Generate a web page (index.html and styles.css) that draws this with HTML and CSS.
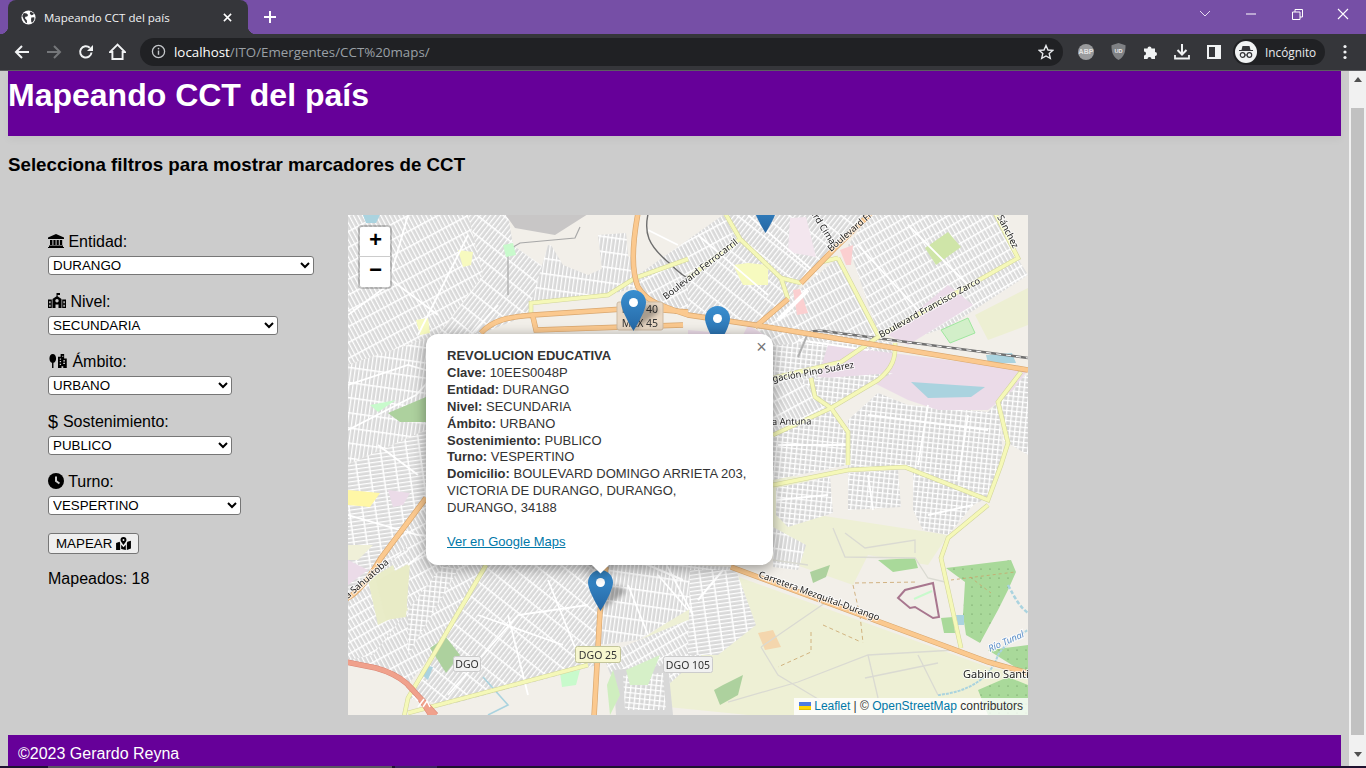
FILE: index.html
```html
<!DOCTYPE html>
<html lang="es">
<head>
<meta charset="utf-8">
<title>Mapeando CCT del país</title>
<link rel="stylesheet" href="styles.css">
</head>
<body>
<div class="chrome">
  <div class="tabstrip">
    <div class="tab">
      <svg class="favicon" viewBox="0 0 16 16"><circle cx="8" cy="8" r="7.500" fill="#fff"/><path d="M3 3.200l3 .6 1.600 1.600-1 1.600-2 .2-.4 1.600 2 2 .2 3-1.200-.1L2.600 9.500 1.300 6.500zM10 1.500l3.600 2-.6 1.500-2 .5-1.600-1.500zM11 8l3.200-.4.100 2.400-2 3.300-1.300-.3-.3-3z" fill="#35363a"/></svg>
      <span class="tab-title">Mapeando CCT del país</span>
      <svg class="tab-close" viewBox="0 0 10 10"><path d="M1 1l8 8M9 1l-8 8" stroke="#fff" stroke-width="1.700"/></svg>
    </div>
    <svg class="newtab" viewBox="0 0 12 12"><path d="M6 0v12M0 6h12" stroke="#fff" stroke-width="2"/></svg>
    <div class="winctl">
      <svg class="wc wc-chev" viewBox="0 0 12 8"><path d="M1 1l5 5 5-5" fill="none" stroke="#e6dcf0" stroke-width="1"/></svg>
      <svg class="wc wc-min" viewBox="0 0 12 2"><path d="M1 1h10" stroke="#fff" stroke-width="1"/></svg>
      <svg class="wc wc-max" viewBox="0 0 11 11"><path d="M.5 3h7.500v7.500H.5zM3 3V.5h7.500V8H8" fill="none" stroke="#fff" stroke-width="1"/></svg>
      <svg class="wc wc-close" viewBox="0 0 12 12"><path d="M1 1l10 10M11 1L1 11" stroke="#fff" stroke-width="1.100"/></svg>
    </div>
  </div>
  <div class="toolbar">
    <svg class="tb tb-back" viewBox="0 0 16 16"><path d="M15 8H2M8 2L2 8l6 6" fill="none" stroke="#f1f3f4" stroke-width="2"/></svg>
    <svg class="tb tb-fwd" viewBox="0 0 16 16"><path d="M1 8h13M8 2l6 6-6 6" fill="none" stroke="#75777a" stroke-width="2"/></svg>
    <svg class="tb tb-reload" viewBox="0 0 16 16"><path d="M13.500 8.500A5.700 5.700 0 1 1 11.800 3.800" fill="none" stroke="#f1f3f4" stroke-width="2"/><path d="M15 1v6H9z" fill="#f1f3f4"/></svg>
    <svg class="tb tb-home" viewBox="0 0 16 16"><path d="M8 1.500L1 8.500h2.200V15h9.600V8.500H15z" fill="none" stroke="#f1f3f4" stroke-width="1.800" stroke-linejoin="miter"/></svg>
    <div class="omnibox">
      <svg class="info" viewBox="0 0 16 16"><circle cx="8" cy="8" r="6.500" fill="none" stroke="#c4c7ca" stroke-width="1.400"/><path d="M8 7v4.500" stroke="#c4c7ca" stroke-width="1.500"/><circle cx="8" cy="4.900" r=".9" fill="#c4c7ca"/></svg>
      <span class="url"><b class="host">localhost</b>/ITO/Emergentes/CCT%20maps/</span>
      <svg class="star" viewBox="0 0 16 16"><path d="M8 1.500l2 4.500 4.800.4-3.600 3.200 1.100 4.800L8 12l-4.300 2.400 1.100-4.800L1.200 6.400 6 6z" fill="none" stroke="#e8eaed" stroke-width="1.400"/></svg>
    </div>
    <div class="ext-abp"><span>ABP</span></div>
    <svg class="ext-ub" viewBox="0 0 16 18"><path d="M8 0l7.500 2.200c0 7-1.200 12-7.500 15.800C1.700 14.200.5 9.200.5 2.200z" fill="#7f8184"/><text x="8" y="10.500" class="ub-text">UD</text></svg>
    <svg class="ext-puzzle" viewBox="0 0 16 16"><path d="M1 4.500h3.500a2 2 0 1 1 4 0H12V8a2 2 0 1 1 0 4v3H8.500a2 2 0 1 0-4 0H1v-3.500a2 2 0 1 0 0-4z" fill="#f1f3f4"/></svg>
    <svg class="ext-dl" viewBox="0 0 16 16"><path d="M8 0v10M3.500 6L8 10.500 12.500 6" fill="none" stroke="#f1f3f4" stroke-width="2"/><path d="M1 11v3.500h14V11" fill="none" stroke="#f1f3f4" stroke-width="1.800"/></svg>
    <svg class="ext-side" viewBox="0 0 14 14"><path d="M0 0h14v14H0z" fill="#f1f3f4"/><path d="M2 2h6v10H2z" fill="#35363a"/></svg>
    <div class="profile">
      <svg class="avatar" viewBox="0 0 22 22"><circle cx="11" cy="11" r="11" fill="#f1f3f4"/><path d="M7.500 5h7l1 4h2.500v1H4v-1h2.500z" fill="#35363a"/><circle cx="7.600" cy="14" r="2.300" fill="none" stroke="#35363a" stroke-width="1.200"/><circle cx="14.400" cy="14" r="2.300" fill="none" stroke="#35363a" stroke-width="1.200"/><path d="M9.900 14h2.200" stroke="#35363a" stroke-width="1"/></svg>
      <span>Incógnito</span>
    </div>
    <svg class="kebab" viewBox="0 0 4 16"><circle cx="2" cy="2.500" r="1.600" fill="#f1f3f4"/><circle cx="2" cy="8" r="1.600" fill="#f1f3f4"/><circle cx="2" cy="13.500" r="1.600" fill="#f1f3f4"/></svg>
  </div>
</div>

<div class="viewport">
  <div class="page">
    <header class="site-header"><h1>Mapeando CCT del país</h1></header>
    <h3 class="subtitle">Selecciona filtros para mostrar marcadores de CCT</h3>
    <main class="content">
      <form class="filters">
        <div class="field">
          <label><svg class="ico ico-w16" viewBox="0 0 16 14"><path d="M8 0L0 3.400V5h16V3.400zM2 6h2.400v5H2zM5.400 6h2.200v5H5.400zM8.600 6h2.200v5H8.600zM11.800 6h2.400v5h-2.400zM1 11.400h14V13H1zM0 13h16v1H0z"/></svg> Entidad:</label>
          <select class="sel-entidad"><option>DURANGO</option></select>
        </div>
        <div class="field">
          <label><svg class="ico ico-w18" viewBox="0 0 18 15"><path d="M8.500 0h3.500v2H9.600v1.300L13.500 6v9h-3v-3.500h-3V15h-3V6l4-2.700zM0 6.500h3.800V15H0zM14.200 6.500H18V15h-3.800zM1.200 8.300v2h1.400v-2zM1.200 11.800v2h1.400v-2zM15.400 8.300v2h1.400v-2zM15.400 11.800v2h1.400v-2z" fill-rule="evenodd"/><circle cx="9" cy="7.700" r="1.700" fill="#ccc"/></svg> Nivel:</label>
          <select class="sel-nivel"><option>SECUNDARIA</option></select>
        </div>
        <div class="field">
          <label><svg class="ico ico-w20" viewBox="0 0 20 16"><path d="M4 0c2.300 0 3.800 2.400 3.800 5S6.300 10 4.800 10v6H3.200v-6C1.700 10 .2 7.600.2 5S1.700 0 4 0z"/><path d="M10 3h3V0h4v5h3v11h-4v-2h-2v2h-4zM12 5v1.500h1.500V5zM12 8v1.500h1.500V8zM15 2v1.500h1V2zM16 7v1.500h2V7zM16 10v1.500h2V10zM12 11v1.500h1.500V11z" fill-rule="evenodd"/></svg> Ámbito:</label>
          <select class="sel-ambito"><option>URBANO</option></select>
        </div>
        <div class="field">
          <label><span class="dollar">$</span> Sostenimiento:</label>
          <select class="sel-sost"><option>PUBLICO</option></select>
        </div>
        <div class="field">
          <label><svg class="ico ico-w16 ico-tall" viewBox="0 0 16 16"><circle cx="8" cy="8" r="8"/><path d="M7 3.500h2v4l3 2.200-1.100 1.500L7 8.500z" fill="#ccc"/></svg> Turno:</label>
          <select class="sel-turno"><option>VESPERTINO</option></select>
        </div>
        <button type="button" class="btn-map">MAPEAR <svg class="ico-map" viewBox="0 0 16 14"><path d="M8 0a3.200 3.200 0 0 1 3.200 3.200C11.200 5 8 8.500 8 8.500S4.800 5 4.800 3.200A3.200 3.200 0 0 1 8 0zM8 2.200a1 1 0 1 0 0 2 1 1 0 0 0 0-2z" fill-rule="evenodd"/><path d="M0 6.500l3.800-1.300.6 1.500V14L0 14zM5.500 8.300L8 11l2.500-2.700V14l-5-1zM11.600 6.700l.6-1.500L16 4v8.500L11.600 14z"/></svg></button>
        <p class="count">Mapeados: 18</p>
      </form>

      <section class="map">
        <svg class="tiles" viewBox="0 0 680 500" aria-hidden="true">
          <defs>
            <pattern id="p1" width="4" height="15" patternUnits="userSpaceOnUse" patternTransform="rotate(8)"><rect width="4" height="15" fill="#d9d9d9"/><path d="M.5 0v15M0 .75h4" stroke="#fff" stroke-width="1.500"/></pattern>
            <pattern id="p2" width="4" height="14" patternUnits="userSpaceOnUse" patternTransform="rotate(-28)"><rect width="4" height="14" fill="#d9d9d9"/><path d="M.5 0v14M0 .75h4" stroke="#fff" stroke-width="1.500"/></pattern>
            <pattern id="p3" width="4" height="16" patternUnits="userSpaceOnUse" patternTransform="rotate(38)"><rect width="4" height="16" fill="#d9d9d9"/><path d="M.5 0v16M0 .75h4" stroke="#fff" stroke-width="1.500"/></pattern>
            <pattern id="p4" width="4" height="13" patternUnits="userSpaceOnUse" patternTransform="rotate(82)"><rect width="4" height="13" fill="#d9d9d9"/><path d="M.5 0v13M0 .75h4" stroke="#fff" stroke-width="1.500"/></pattern>
            <pattern id="p5" width="5" height="5" patternUnits="userSpaceOnUse" patternTransform="rotate(6)"><rect width="5" height="5" fill="#d6d6d6"/><path d="M.5 0v5M0 .5h5" stroke="#fff" stroke-width="1.700"/></pattern>
            <pattern id="p6" width="4" height="10" patternUnits="userSpaceOnUse" patternTransform="rotate(-30)"><rect width="4" height="10" fill="#dadada"/><path d="M.5 0v10M0 .75h4" stroke="#fff" stroke-width="1.500"/></pattern>
            <pattern id="dots" width="9" height="9" patternUnits="userSpaceOnUse"><rect width="9" height="9" fill="#a9d99a"/><circle cx="3" cy="3" r=".6" fill="#5f8c53"/></pattern>
            <linearGradient id="mk" x1="0" y1="0" x2="0" y2="1"><stop offset="0" stop-color="#3a8fd0"/><stop offset="1" stop-color="#2567a4"/></linearGradient>
            <path id="pri1" d="M290-2C285 25 283 55 290 72C298 85 305 88 340 100L407 110L680 155"/>
            <path id="pri1b" d="M133 118C145 105 160 102 185 100L290 93L340 97M185 102L188 115L335 110"/>
            <path id="pri2" d="M407 112L440 84M453 68L486 34L523-2"/>
            <path id="pri3" d="M383 352L640 447L680 458"/>
            <path id="pri4" d="M78 283L33 343C20 365 10 378-2 384"/>
            <path id="pri5" d="M258 352L252 397L249 450L246 502"/>
            <path id="sec1" d="M377-2L392 24L433 63L440 84M392 24L340 63M340 44L287 63L260 80L183 88L183 100"/>
            <path id="sec2" d="M490 43L530 120M433 63L453 68M490 43L473 47"/>
            <path id="sec3" d="M425 163L493 147L530 122L670 43L647-2"/>
            <path id="sec4" d="M547 128C548 142 545 153 530 165L483 193L440 213L425 220"/>
            <path id="sec5" d="M463 163L467 182L483 193L500 217V250M425 270L500 255L557 252L640 285L653 250L660 228L650 187L673 157"/>
            <path id="sec6" d="M640 290L600 323L593 343L613 433"/>
            <path id="sec7" d="M138 350L93 427L60 483L56 502M60 498L240 450"/>
            <path id="mw" d="M-2 447L28 453C53 460 65 470 84 502M60 470L88 500"/>
          </defs>
          <rect width="680" height="500" fill="#f2efe9"/>

          <!-- farmland -->
          <path d="M400 260L460 262L470 300L600 320L580 350L520 340L505 370L420 340L383 350L360 320L380 290zM385 360L640 452L680 460V500H400L300 490L270 440L330 400z" fill="#eef0d5"/>
          <path d="M627 100L680 73V110L640 125z" fill="#edefd3"/>

          <!-- urban west -->
          <path d="M-1-1H120L135 60L90 120L-1 150z" fill="url(#p2)"/>
          <path d="M120-1H160L165 30L200 55L180 100L135 118L90 120L135 60z" fill="url(#p3)"/>
          <path d="M-1 150L90 120L135 118L125 200L78 215L-1 250z" fill="url(#p1)"/>
          <path d="M-1 250L78 215L78 283L33 343L-1 384z" fill="url(#p4)"/>
          <path d="M78 283L120 240L180 350L138 350L93 427L60 470L28 453L-1 447V384L33 343z" fill="url(#p2)"/>
          <path d="M138 350H258L249 450L100 490L60 483L93 427z" fill="url(#p3)"/>
          <path d="M258 350L340 350L383 352L340 395L290 425L252 430z" fill="url(#p1)"/>
          <path d="M200 30L285 40L290 72L260 80L183 88z" fill="url(#p1)"/>
          <path d="M290 60L375 0L392 24L340 63L340 97L295 92z" fill="url(#p2)"/>
          <path d="M0 380C20 375 45 345 60 330L60 395L25 440L0 445z" fill="url(#p6)"/>
          <path d="M60 395L95 350L110 355L60 440z" fill="url(#p5)"/>
          <path d="M255 440L340 405L365 430L320 470L270 480z" fill="url(#p6)"/>
          <path d="M265 455L320 450L325 500H268z" fill="#d8d8d8"/>
          <path d="M275 460L315 458L318 495H277z" fill="url(#p5)"/>

          <!-- urban east -->
          <path d="M392 24L377-1H523L486 34L440 84L407 110L340 100V63z" fill="url(#p3)"/>
          <path d="M440 84L490 43L530 120L493 147L425 130L407 112z" fill="url(#p2)"/>
          <path d="M500 30L523-1H647L670 43L580 95L530 118z" fill="url(#p6)"/>
          <path d="M540 95L660 28L680 60L600 112L560 125z" fill="url(#p6)"/>
          <path d="M425 130L530 125L500 150L425 165z" fill="url(#p5)"/>
          <path d="M425 165L493 150L530 125L547 128L545 155L483 193L425 220z" fill="url(#p2)"/>
          <path d="M425 220L483 193L500 217V250L425 265z" fill="url(#p5)"/>
          <path d="M500 205L530 178L560 190L640 197L650 187L655 240L640 285L557 252L500 255z" fill="url(#p5)"/>
          <path d="M650 170L680 160V240L655 225z" fill="url(#p5)"/>
          <path d="M428 273L482 262L485 298L440 312L428 300z" fill="url(#p5)"/>
          <path d="M500 258L550 255L553 292L500 295z" fill="url(#p5)"/>
          <path d="M565 256L635 285L625 290L600 320L575 315L565 295z" fill="url(#p5)"/>
          <path d="M342 355L388 355L408 410L370 440L340 440z" fill="url(#p4)"/>
          <path d="M425 312L458 330L450 355L425 352z" fill="url(#p1)"/>

          <!-- land use -->
          <path d="M540 120L600 70L625 90L560 130zM480 130L680 155L665 175L640 195L590 195L560 185L520 165L470 162z" fill="#ebdbe8"/>
          <path d="M450 165L545 158L530 165L483 190z" fill="url(#p5)"/>
          <path d="M563 167L637 172L623 182L580 183z" fill="#aad3df"/>
          <path d="M638 140L664 138L668 148L640 148z" fill="#aad3df"/>
          <path d="M577 33L600 17L613 32L588 50z" fill="#cfe5a8"/>
          <path d="M593 115L620 103L627 118L602 128z" fill="#d2efc9" stroke="#9ee79e"/>
          <path d="M442 3L458 2L468 42L440 37z" fill="#f3e6ee"/>
          <path d="M385 50L400 48L420 50L420 70L395 70z" fill="#f7fabf"/>
          <path d="M445 75L452 74L460 98L449 100z" fill="#fbcfd0"/>
          <path d="M492 35L505 30L503 50L498 50z" fill="#fbcfd0"/>
          <path d="M340 115L395 120L400 110L420 122L340 120z" fill="#ebdbe8"/>
          <path d="M0 345L20 355L0 370z" fill="#ebdbe8"/>
          <path d="M40 275L62 278L55 290L45 292z" fill="#ebdbe8"/>
          <path d="M0 275L32 278L22 292L0 290z" fill="#fff7a6"/>

          <!-- quarry and gray lots -->
          <path d="M157-1H240L207 20L167 13z" fill="#c8c6c6"/>
          <path d="M200 25L240 3L280 10L285 40L240 60L215 50z" fill="#f2efe9"/>
          <path d="M250 20L278 18L282 60L255 65z" fill="url(#p1)"/>
          <path d="M160 80V35L172 28L227 23L232 12" fill="none" stroke="#a8a8a8" stroke-width="1.200"/>
          <path d="M20 365L45 350L60 395L30 410z" fill="#e9ecc8"/>
          <path d="M0 330H25L10 345H0z" fill="#f0f0d8"/>
          <path d="M28 366L62 348L58 402L38 405z" fill="#e8ebc6"/>

          <!-- parks -->
          <path d="M40 198L78 182L78 207L52 207z" fill="#add19e"/>
          <path d="M22 190L48 185L30 197z" fill="#c8facc"/>
          <path d="M110 35L125 37L123 50L115 52z" fill="#f7fabf"/>
          <path d="M68 105L80 103L82 118L72 120z" fill="#f7fabf"/>
          <path d="M155 30L165 28L168 40L158 42z" fill="#c8facc"/>
          <path d="M82 433L98 422L112 440L98 458z" fill="#add19e"/>
          <path d="M212 458L232 455L228 470L214 472z" fill="#c8facc"/>
          <path d="M462 357L482 350L478 362L465 368z" fill="#add19e"/>
          <path d="M530 345L567 343L570 353L545 357z" fill="#a9d99a"/>
          <path d="M598 353L663 345L668 357L660 375L650 395L632 428L618 420L615 400L617 367z" fill="url(#dots)"/>
          <path d="M593 403L605 402L607 418L596 418z" fill="#a9d99a"/>
          <path d="M366 475L375 470L395 460L390 480L372 490z" fill="#add19e"/>
          <path d="M640 435L680 430V460zM630 475L660 462L680 470V500H640z" fill="url(#dots)"/>
          <path d="M278 455L312 440L300 470L282 470z" fill="#d6f0c8"/>
          <path d="M259 470L265 455L272 480L262 500z" fill="#cfeebf"/>
          <path d="M608 400L616 400V410L610 410z" fill="#aad3df"/>
          <path d="M410 418L425 415L433 432L417 435z" fill="#f4d6ad"/>

          <!-- water -->
          <path d="M590 480C610 478 640 470 650 440C660 425 672 420 680 415" fill="none" stroke="#aad3df" stroke-width="2" stroke-dasharray="3 1"/>
          <path d="M660 370C668 385 672 392 680 398" fill="none" stroke="#aad3df" stroke-width="2.500" stroke-dasharray="4 2"/>
          <path d="M135 462L160 490L140 500" fill="none" stroke="#aad3df" stroke-width="1.600"/>
          <path d="M72 458C75 452 80 450 85 452L80 465z" fill="#aad3df"/>
          <path d="M15 0H32L28 8H18z" fill="#aad3df"/>

          <!-- minor streets -->
          <path d="M0 215L68 180L150 90M160 250L120 175L100 140M150 260L250 220L345 400M0 300L70 320L200 330L300 350M100 480L170 400L240 390M60 350L120 300M10 40L90 100M60 0L40 70L0 100M120 20L70 120M0 170L60 150L130 170M30 230L70 260M160 400L180 480M200 365L230 440M130 400L215 430M280 370L300 420M310 360L340 395M300 15L330 30M350 20L420 80M400 0L470 60M510 30L570 95M560 10L620 70M450 125L520 135M430 230L500 230M520 200L640 215M580 190L570 250M620 200L610 265M428 285L480 280M520 260L525 295M580 300L625 290" fill="none" stroke="#fff" stroke-width="1.800"/>
          <path d="M485 313L497 342L567 343L580 363L597 367M497 318L517 333L567 325L567 338M477 388L413 432M413 432L430 460L480 490M380 487L450 467L520 440L607 435M520 440L530 483M517 463L590 448M570 440L590 480M425 345L460 350" fill="none" stroke="#dadad2" stroke-width="1.300"/>
          <path d="M300 350L335 365M350 385L375 355" fill="none" stroke="#fff" stroke-width="2"/>
          <path d="M450 85L430 105M460 75L445 90" fill="none" stroke="#fff" stroke-width="4"/>

          <!-- tracks -->
          <path d="M507 368L570 367M505 370L510 392M475 410L513 427M512 400L515 428M463 417L463 437L430 452" fill="none" stroke="#c9a36a" stroke-width=".8" stroke-dasharray="4 3"/>
          <path d="M603 365L667 357M622 362L643 378" fill="none" stroke="#c9a36a" stroke-width=".8" stroke-dasharray="3 3"/>

          <!-- boundary -->
          <path d="M550 383L557 375L585 368L591 402L585 403L567 392L562 393z" fill="#f2efe9" stroke="#a06a85" stroke-width="2" opacity=".9"/>
          <path d="M566 384L584 376" stroke="#c8facc" stroke-width="2"/>

          <!-- rail -->
          <path d="M300-1C296 18 300 30 320 47C328 54 333 60 340 63" fill="none" stroke="#6e6e6e" stroke-width="1.400"/>
          <path d="M460 118C465 116 468 115 475 116L680 143" fill="none" stroke="#707070" stroke-width="2.400"/>
          <path d="M460 118C465 116 468 115 475 116L680 143" fill="none" stroke="#fff" stroke-width="1" stroke-dasharray="5 5"/>
          <path d="M460 118L450 142" fill="none" stroke="#b0b0b0" stroke-width="2"/>

          <!-- roads -->
          <g class="case-sec">
            <use href="#sec1"/><use href="#sec2"/><use href="#sec3"/><use href="#sec4"/><use href="#sec5"/><use href="#sec6"/><use href="#sec7"/>
          </g>
          <g class="fill-sec">
            <use href="#sec1"/><use href="#sec2"/><use href="#sec3"/><use href="#sec4"/><use href="#sec5"/><use href="#sec6"/><use href="#sec7"/>
          </g>
          <g class="case-pri">
            <use href="#pri1"/><use href="#pri1b"/><use href="#pri2"/><use href="#pri3"/><use href="#pri4"/><use href="#pri5"/>
          </g>
          <g class="fill-pri">
            <use href="#pri1"/><use href="#pri1b"/><use href="#pri2"/><use href="#pri3"/><use href="#pri4"/><use href="#pri5"/>
          </g>
          <g class="case-mw"><use href="#mw"/></g>
          <g class="fill-mw"><use href="#mw"/></g>
          <path d="M75 492l4-6 3 6M64 480l6 6M70 492l6-8" fill="none" stroke="#fff" stroke-width="1.500"/>

          <!-- labels -->
          <g class="lbl">
            <text transform="translate(318 85) rotate(-38)">Boulevard Ferrocarril</text>
            <text transform="translate(483 37) rotate(-41)">Boulevard Fra</text>
            <text transform="translate(462 -3) rotate(58)">ard Cima</text>
            <text transform="translate(646 -4) rotate(63)">z Sánchez</text>
            <text transform="translate(533 123) rotate(-29)">Boulevard Francisco Zarco</text>
            <text transform="translate(425 167) rotate(-10)">gación Pino Suárez</text>
            <text transform="translate(424 210) rotate(-1)">a Antuna</text>
            <text transform="translate(0 384) rotate(-41)">a Sahuatoba</text>
            <text transform="translate(410 362) rotate(20)">Carretera Mezquital-Durango</text>
            <text class="lbl-river" transform="translate(642 437) rotate(-24)">Río Tunal</text>
            <text class="lbl-town" x="615" y="463">Gabino Santi</text>
          </g>
          <g class="shield">
            <rect x="269" y="87" width="46" height="28" rx="2" fill="#e9d8c4" stroke="#cdbba4"/>
            <text x="292" y="98">MEX 40</text><text x="292" y="112">MEX 45</text>
            <rect x="227.500" y="431.500" width="45" height="16" rx="2" fill="#f7f7cf" stroke="#c3c59a"/>
            <text x="250" y="444">DGO 25</text>
            <rect x="105.500" y="441.500" width="27" height="15" rx="2" fill="#f1f1f1" stroke="#ccc"/>
            <text x="119" y="453">DGO</text>
            <rect x="315.500" y="441.500" width="49" height="16" rx="2" fill="#f1f1f1" stroke="#ccc"/>
            <text x="340" y="454">DGO 105</text>
          </g>
        </svg>

        <svg class="pin pin-a" viewBox="0 0 25 41"><path d="M12.500 0C5.600 0 0 5.600 0 12.500 0 21 12.500 41 12.500 41S25 21 25 12.500C25 5.600 19.400 0 12.500 0z" fill="url(#mk)"/><circle cx="12.500" cy="12.500" r="4.500" fill="#fff"/></svg>
        <svg class="pin-shadow ps-b" viewBox="0 0 41 41"><path d="M12 41L38 22C36 16 26 14 20 17z" fill="#000" opacity=".28"/></svg>
        <svg class="pin pin-b" viewBox="0 0 25 41"><path d="M12.500 0C5.600 0 0 5.600 0 12.500 0 21 12.500 41 12.500 41S25 21 25 12.500C25 5.600 19.400 0 12.500 0z" fill="url(#mk)"/><circle cx="12.500" cy="12.500" r="4.500" fill="#fff"/></svg>
        <svg class="pin pin-c" viewBox="0 0 25 41"><path d="M12.500 0C5.600 0 0 5.600 0 12.500 0 21 12.500 41 12.500 41S25 21 25 12.500C25 5.600 19.400 0 12.500 0z" fill="url(#mk)"/><circle cx="12.500" cy="12.500" r="4.500" fill="#fff"/></svg>
        <svg class="pin-shadow ps-d" viewBox="0 0 41 41"><path d="M12 41L38 22C36 16 26 14 20 17z" fill="#000" opacity=".28"/></svg>
        <svg class="pin pin-d" viewBox="0 0 25 41"><path d="M12.500 0C5.600 0 0 5.600 0 12.500 0 21 12.500 41 12.500 41S25 21 25 12.500C25 5.600 19.400 0 12.500 0z" fill="url(#mk)"/><circle cx="12.500" cy="12.500" r="4.500" fill="#fff"/></svg>

        <div class="zoom-ctl">
          <a class="zoom-in">+</a>
          <a class="zoom-out">−</a>
        </div>

        <div class="popup">
          <span class="popup-close">×</span>
          <div class="popup-body">
            <b>REVOLUCION EDUCATIVA</b><br>
            <b>Clave:</b> 10EES0048P<br>
            <b>Entidad:</b> DURANGO<br>
            <b>Nivel:</b> SECUNDARIA<br>
            <b>Ámbito:</b> URBANO<br>
            <b>Sostenimiento:</b> PUBLICO<br>
            <b>Turno:</b> VESPERTINO<br>
            <b>Domicilio:</b> BOULEVARD DOMINGO ARRIETA 203, VICTORIA DE DURANGO, DURANGO, DURANGO, 34188<br><br>
            <a class="gmaps">Ver en Google Maps</a>
          </div>
          <div class="popup-tip"><span class="popup-tip-sq"></span></div>
        </div>

        <div class="attribution">
          <svg class="flag" viewBox="0 0 12 8"><path d="M0 0h12v4H0z" fill="#4C7BE1"/><path d="M0 4h12v3H0z" fill="#FFD500"/><path d="M0 7h12v1H0z" fill="#E0BC00"/></svg>
          <a>Leaflet</a> <span class="sep">|</span> © <a>OpenStreetMap</a> contributors
        </div>
      </section>
    </main>
    <footer class="site-footer">©2023 Gerardo Reyna</footer>
  </div>
  <div class="scrollbar">
    <span class="sb-up"></span>
    <span class="sb-thumb"></span>
    <span class="sb-down"></span>
  </div>
</div>
<div class="taskbar"><span class="tk-a"></span><span class="tk-b"></span></div>
</body>
</html>
```

FILE: styles.css
```css
* { box-sizing: border-box; }
html, body { margin: 0; height: 100%; overflow: hidden; }
body { display: flex; flex-direction: column; height: 768px; font-family: "Liberation Sans", Arial, sans-serif; background: #ccc; }

/* browser frame */
.chrome { flex: none; font-family: "Open Sans", "Noto Sans", sans-serif; color: #fff; }
.tabstrip { height: 34px; background: #764fa6; display: flex; align-items: flex-end; padding-left: 8px; }
.tab { width: 240px; height: 34px; background: #35363a; border-radius: 8px 8px 0 0; display: flex; align-items: center; padding: 0 16px 0 13px; position: relative; }
.tab::before, .tab::after { content: ""; position: absolute; bottom: 0; width: 8px; height: 8px; }
.tab::before { left: -8px; background: radial-gradient(circle at 0 0, transparent 8px, #35363a 8.500px); }
.tab::after { right: -8px; background: radial-gradient(circle at 100% 0, transparent 8px, #35363a 8.500px); }
.favicon { width: 15px; height: 15px; flex: none; }
.tab-title { font-size: 11.500px; margin-left: 8px; flex: 1; white-space: nowrap; color: #f1f3f4; }
.tab-close { width: 9px; height: 9px; flex: none; }
.newtab { width: 12px; height: 12px; margin: 0 0 11px 16px; flex: none; }
.winctl { margin-left: auto; display: flex; align-items: center; height: 34px; padding-bottom: 6px; }
.wc { flex: none; display: block; }
.wc-chev { width: 12px; height: 8px; margin-right: 34px; }
.wc-min { width: 12px; height: 2px; margin-right: 34.500px; }
.wc-max { width: 11px; height: 11px; margin-right: 34.500px; }
.wc-close { width: 12px; height: 12px; margin-right: 17px; }

.toolbar { height: 37px; background: #35363a; border-bottom: 1px solid #5c5d60; display: flex; align-items: center; padding: 0 17px 1px 14px; }
.tb { width: 16px; height: 16px; flex: none; }
.tb-fwd { margin-left: 16px; }
.tb-reload { margin-left: 16px; }
.tb-home { margin-left: 15px; width: 17px; height: 17px; }
.omnibox { margin-left: 14px; width: 923px; height: 28px; border-radius: 14px; background: #202124; display: flex; align-items: center; padding: 0 9px 0 11px; flex: none; }
.info { width: 15px; height: 15px; flex: none; }
.url { margin-left: 8px; font-size: 13.330px; color: #9aa0a6; white-space: nowrap; flex: 1; }
.host { color: #fff; font-weight: 400; }
.star { width: 16px; height: 16px; flex: none; }
.ext-abp { width: 16px; height: 16px; border-radius: 50%; background: #9a9b9d; margin-left: 15px; flex: none; display: flex; align-items: center; justify-content: center; }
.ext-abp span { font: 700 7px "Liberation Sans", sans-serif; color: #e4e4e4; }
.ext-ub { width: 15px; height: 17px; margin-left: 17px; flex: none; }
.ub-text { font: 700 6px "Liberation Sans", sans-serif; fill: #eee; text-anchor: middle; }
.ext-puzzle { width: 16px; height: 16px; margin-left: 17px; flex: none; }
.ext-dl { width: 16px; height: 16px; margin-left: 15px; flex: none; }
.ext-side { width: 14px; height: 14px; margin-left: 17px; flex: none; }
.profile { margin-left: 12px; width: 92px; height: 26px; border-radius: 13px; background: #202124; display: flex; align-items: center; padding-left: 2px; flex: none; font-size: 11.800px; color: #e8eaed; }
.avatar { width: 22px; height: 22px; flex: none; margin-right: 8px; }
.kebab { width: 4px; height: 16px; margin-left: 18px; flex: none; }

/* page */
.viewport { flex: 1; min-height: 0; display: flex; overflow: hidden; }
.page { width: 1349px; flex: none; padding: 0 8px; display: flex; flex-direction: column; background: #ccc; }
.site-header { height: 65px; flex: none; background: #660099; box-shadow: 0 4px 8px rgba(0,0,0,.04); padding-top: 6px; }
.site-header h1 { margin: 0; font-size: 32px; line-height: 37px; font-weight: 700; color: #fff; }
.subtitle { margin: 18px 0 0; font-size: 18.740px; line-height: 22px; font-weight: 700; color: #000; }
.content { display: flex; padding: 39px 0 0 40px; height: 559px; flex: none; }
.filters { width: 300px; flex: none; padding-top: 18px; }
.field { display: flex; flex-direction: column; align-items: flex-start; height: 60px; }
.field label { font-size: 16px; line-height: 18px; height: 18px; color: #000; white-space: nowrap; margin-bottom: 5px; display: block; }
.ico { display: inline-block; height: 14px; vertical-align: -1px; fill: #000; }
.ico-w16 { width: 16px; }
.ico-w18 { width: 18px; height: 15px; }
.ico-w20 { width: 20px; }
.ico-tall { height: 16px; vertical-align: -2px; }
.dollar { display: inline-block; width: 10.500px; font-size: 18px; line-height: 16px; vertical-align: -1px; }
select { font: 13.333px "Liberation Sans", Arial, sans-serif; height: 19px; background: #fff; color: #000; border: 1px solid #767676; border-radius: 3px; padding: 0; }
.sel-entidad { width: 266px; }
.sel-nivel { width: 230px; }
.sel-ambito { width: 184px; }
.sel-sost { width: 184px; }
.sel-turno { width: 193px; }
.btn-map { display: flex; align-items: center; gap: 4px; width: 91px; height: 21px; margin-top: 0; padding: 0 0 0 7px; font: 13.333px "Liberation Sans", Arial, sans-serif; color: #000; background: #efefef; border: 1px solid #767676; border-radius: 3px; }
.ico-map { width: 15px; height: 13px; fill: #000; flex: none; }
.count { margin: 16px 0 0; font-size: 16px; line-height: 18px; color: #000; }

/* map */
.map { width: 680px; height: 500px; flex: none; position: relative; overflow: hidden; background: #ddd; }
.tiles { display: block; width: 680px; height: 500px; filter: blur(.3px); }
.case-pri { fill: none; stroke: #d9a76f; stroke-width: 5.500; }
.fill-pri { fill: none; stroke: #fbc98f; stroke-width: 4.200; }
.case-sec { fill: none; stroke: #d2d59b; stroke-width: 4.600; }
.fill-sec { fill: none; stroke: #f5f8b8; stroke-width: 3.500; }
.case-mw { fill: none; stroke: #d98574; stroke-width: 5.500; }
.fill-mw { fill: none; stroke: #f0a18c; stroke-width: 4.500; }
.lbl text { font: 9.300px "Noto Sans", "Open Sans", sans-serif; fill: #222; stroke: #fff; stroke-width: 2px; stroke-opacity: .75; paint-order: stroke; }
.lbl .lbl-river { fill: #5d8fc9; font-style: italic; }
.lbl .lbl-town { font-size: 11px; }
.shield text { font: 10.500px "Noto Sans", "Open Sans", sans-serif; fill: #333; text-anchor: middle; }

.pin { position: absolute; width: 25px; height: 41px; }
.pin-a { left: 405px; top: -23px; }
.pin-b { left: 273px; top: 75px; }
.pin-c { left: 357px; top: 91px; }
.pin-d { left: 240px; top: 355px; }
.pin-shadow { position: absolute; width: 41px; height: 41px; filter: blur(2px); }
.ps-b { left: 273px; top: 75px; }
.ps-d { left: 240px; top: 355px; }

.zoom-ctl { position: absolute; left: 10px; top: 10px; width: 34px; border: 2px solid rgba(0,0,0,.2); border-radius: 4px; background-clip: padding-box; }
.zoom-ctl a { display: block; width: 30px; height: 30px; background: #fff; color: #000; text-align: center; font: 700 22px/30px "Lucida Console", "Liberation Mono", monospace; text-indent: 1px; }
.zoom-in { border-bottom: 1px solid #ccc; border-radius: 2px 2px 0 0; }
.zoom-out { border-radius: 0 0 2px 2px; }

.popup { position: absolute; left: 78px; top: 119px; width: 347px; height: 231px; background: #fff; border-radius: 12px; box-shadow: 0 3px 14px rgba(0,0,0,.4); color: #333; font-size: 13px; line-height: 16.900px; }
.popup-body { padding: 14px 24px 0 21px; position: relative; z-index: 1; }
.popup-close { position: absolute; right: 5px; top: 4px; width: 13px; height: 18px; z-index: 2; font: 18px/18px "Liberation Sans", sans-serif; color: #757575; text-align: center; }
.popup-tip { position: absolute; left: 154px; top: 231px; width: 40px; height: 20px; overflow: hidden; }
.popup-tip-sq { position: absolute; left: 12px; top: -12px; width: 17px; height: 17px; background: #fff; transform: rotate(45deg); box-shadow: 0 3px 14px rgba(0,0,0,.4); }
.gmaps { color: #0078a8; text-decoration: underline; }

.attribution { position: absolute; right: 0; bottom: 0; height: 17px; padding: 0 5px; background: rgba(255,255,255,.8); color: #333; font-size: 12px; line-height: 17px; white-space: nowrap; }
.attribution a { color: #0078a8; }
.sep { color: #333; }
.flag { width: 12px; height: 8px; display: inline-block; margin-right: 0; }

.site-footer { height: 33px; flex: none; background: #660099; color: #fff; font-size: 16px; line-height: 18px; padding: 10px 0 0 10px; }

/* scrollbar */
.scrollbar { width: 17px; flex: none; background: #f1f1f1; display: flex; flex-direction: column; align-items: center; position: relative; }
.sb-up { width: 0; height: 0; margin-top: 6px; border: 4.500px solid transparent; border-top: 0; border-bottom: 5px solid #505050; flex: none; }
.sb-thumb { width: 13px; height: 627px; margin-top: 26px; background: #c1c1c1; flex: none; }
.sb-down { width: 0; height: 0; margin-top: 17px; border: 4.500px solid transparent; border-bottom: 0; border-top: 5px solid #505050; flex: none; }

.taskbar { position: absolute; left: 0; right: 0; bottom: 0; height: 2px; background: #1f1230; }
.tk-a { position: absolute; left: 48px; width: 344px; top: 0; height: 2px; background: #5a5560; }
.tk-b { position: absolute; left: 395px; width: 42px; top: 0; height: 2px; background: #3e2560; }
```
